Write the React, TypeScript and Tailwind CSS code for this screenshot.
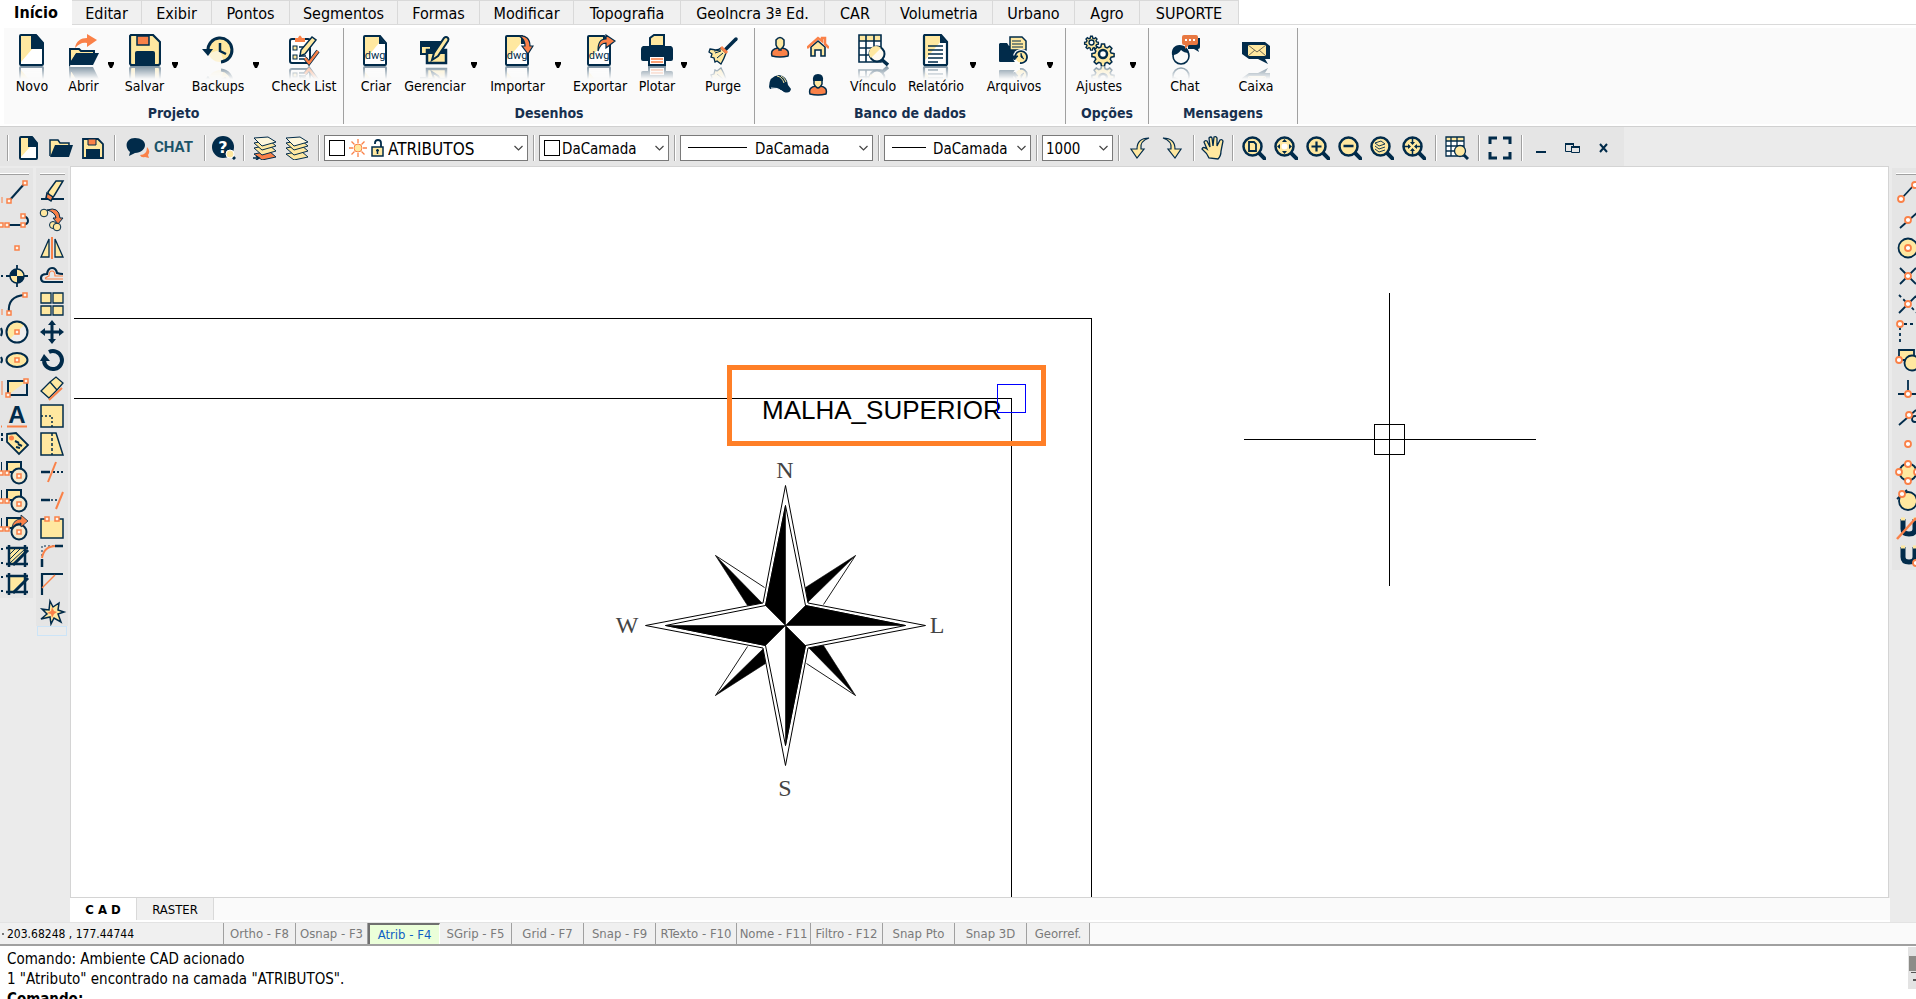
import type { ReactNode } from "react"
import { clsx } from "clsx"

const N = "#012b4a"
const Y = "#ffe8a0"
const O = "#fa8148"

/* ---------- small drawing helpers ---------- */

function Node({ x, y }: { x: number; y: number }) {
  return <rect x={x - 2} y={y - 2} width="4" height="4" fill="#fff3e6" stroke={O} strokeWidth="1.5" />
}

function Dot({ x, y }: { x: number; y: number }) {
  return <circle cx={x} cy={y} r="3" fill="#fff" stroke={O} strokeWidth="1.8" />
}

function Lens({ children }: { children?: ReactNode }) {
  return (
    <>
      <path d="M17 17l5.500 5.500" stroke={N} strokeWidth="4" strokeLinecap="square" />
      <circle cx="10.500" cy="10.500" r="9" fill={Y} stroke={N} strokeWidth="2.500" />
      {children}
    </>
  )
}

/* ---------- ribbon icons, 32 x 32 ---------- */

const dwgPage = (
  <>
    <path d="M5 2h17l5 6v22q0 1-1 1H5q-1 0-1-1V3q0-1 1-1z" fill="#fff" />
    <path d="M5 2h14v7L5 26z" fill={Y} />
    <path d="M5 2h15l6 7v21q0 1-1 1H5q-1 0-1-1V3q0-1 1-1z" fill="none" stroke={N} strokeWidth="2" />
    <path d="M19 2l7 8h-7z" fill={N} />
    <text x="15" y="25" textAnchor="middle" fontSize="11" fontFamily="Roboto, sans-serif" fill={N}>
      dwg
    </text>
  </>
)

const gearPath =
  "M-1.500-10h3l.6 3 2 .9 2.600-1.700 2.200 2.200-1.700 2.600.9 2 3 .6v3l-3 .6-.9 2 1.700 2.600-2.200 2.200-2.600-1.700-2 .9-.6 3h-3l-.6-3-2-.9-2.600 1.700-2.200-2.200 1.700-2.600-.9-2-3-.6v-3l3-.6.9-2-1.700-2.600 2.200-2.200 2.600 1.700 2-.9z"

const big = {
  novo: (
    <>
      <path d="M5 1h14l8 9v20q0 1-1 1H5z" fill="#fff" />
      <path d="M5 1h12v13L5 28z" fill={Y} />
      <path d="M5 1h15l7 8v21q0 1-1 1H5q-1 0-1-1V2q0-1 1-1z" fill="none" stroke={N} strokeWidth="2" />
      <path d="M15 1h6l6 8v6H15z" fill={N} />
    </>
  ),
  abrir: (
    <>
      <path d="M7 14C8 7 13 4 19 4V0l10 6-10 7v-4c-5-1-8 1-12 5z" fill={O} />
      <path d="M2 30V15h9l2 2h13v4H8z" fill={Y} stroke={N} strokeWidth="2" />
      <path d="M8 19h23l-6 12H2z" fill={N} />
    </>
  ),
  salvar: (
    <>
      <path d="M2 1h22l7 7v21q0 2-2 2H2q-1-1-1-2V2z" fill={Y} stroke={N} strokeWidth="2.200" />
      <path d="M8 2h12v9H8z" fill={O} stroke={N} strokeWidth="1.500" />
      <path d="M6 31V19q0-2 2-2h16q2 0 2 2v12z" fill={N} />
    </>
  ),
  backups: (
    <>
      <circle cx="18" cy="16" r="12" fill={Y} />
      <path d="M18 16l4 12H8l-4-8z" fill="#fafafa" opacity=".6" />
      <path d="M6 17A12 12 0 1 1 19 28" fill="none" stroke={N} strokeWidth="3" />
      <path d="M0 15h11l-5 7z" fill={N} />
      <path d="M18 9v8l6 3" fill="none" stroke={N} strokeWidth="2.500" />
    </>
  ),
  check: (
    <>
      <rect x="2" y="5" width="20" height="24" rx="2" fill="#fff" stroke={N} strokeWidth="2" />
      <path d="M7 8V4h3q2-5 4 0h3v4z" fill={O} />
      <rect x="5" y="12" width="4" height="4" fill={Y} stroke={N} />
      <rect x="5" y="21" width="4" height="4" fill={Y} stroke={N} />
      <path d="M11 13h5M11 22h7M11 25h7" stroke={N} strokeWidth="1.500" />
      <path d="M12 22l1-6L24 3l4 3-11 14z" fill={Y} stroke={N} strokeWidth="1.500" />
      <path d="M17 24l4 5 9-12" fill="none" stroke={N} strokeWidth="4" />
      <path d="M17 24l4 5 9-12" fill="none" stroke={O} strokeWidth="2.500" />
    </>
  ),
  criar: dwgPage,
  gerenciar: (
    <>
      <path d="M1 7h23v12H1z" fill={N} />
      <path d="M2 12h10v8H2z" fill={Y} stroke={N} strokeWidth="2" />
      <path d="M8 16h19v13H8z" fill={Y} stroke={N} strokeWidth="2.500" />
      <path d="M8 16h19v4H8z" fill={N} />
      <path d="M13 26l2-7L25 4q2-2 4 0 1 1 0 3L19 22z" fill={Y} stroke={N} strokeWidth="2" />
    </>
  ),
  importar: (
    <>
      {dwgPage}
      <path d="M17 2c7-1 11 3 11 10h3l-5 8-6-8h3c0-5-2-8-6-10z" fill={O} stroke={N} strokeWidth="1.200" />
    </>
  ),
  exportar: (
    <>
      {dwgPage}
      <path d="M14 17c0-8 2-12 8-12V1l9 6-9 7v-5c-4 0-6 2-8 8z" fill={O} stroke={N} strokeWidth="1.200" />
    </>
  ),
  plotar: (
    <>
      <path d="M9 12V4l4-3h10v11z" fill={Y} stroke={N} strokeWidth="2" />
      <path d="M2 12h28q2 1 2 3v10q0 2-2 2h-5v-4H7v4H2q-2 0-2-2V15q0-2 2-3z" fill={N} />
      <path d="M8 22h16v9H8z" fill="#fff" stroke={N} strokeWidth="2" />
      <path d="M10 25h12M10 28h12" stroke={O} strokeWidth="1.500" />
    </>
  ),
  purge: (
    <>
      <path d="M29 5L18 16" stroke={N} strokeWidth="3.500" strokeLinecap="round" />
      <path d="M3 15q8 2 11-1l5 5q-2 6-5 11l-4-3-2 1-1-4-3-1 1-3-3-2z" fill={Y} stroke={N} strokeWidth="1.300" />
      <path d="M8 19l6-2M10 24l6-5M7 17l7-1" stroke={N} strokeWidth="1" />
      <path d="M14 13l6 6" stroke={O} strokeWidth="3" />
    </>
  ),
  vinculo: (
    <>
      <path d="M2 1h22v27H2z" fill="#fff" />
      <path d="M2 1h22v6H2z" fill={Y} />
      <path d="M2 1h22v27H2zM2 7h22M2 14h22M2 21h22M9 1v27M17 1v27" fill="none" stroke={N} strokeWidth="1.600" />
      <path d="M24 25l7 6" stroke={N} strokeWidth="3.500" />
      <circle cx="20" cy="20" r="7.500" fill="#fffaf0" stroke={N} strokeWidth="2" />
      <path d="M14 24a7 7 0 0 1 10-10z" fill={Y} />
    </>
  ),
  relatorio: (
    <>
      <path d="M5 1h17l6 7v22q0 1-1 1H5z" fill="#fff" />
      <path d="M5 1h16v6L5 26z" fill={Y} />
      <path d="M5 1h16l6 7v22q0 1-1 1H5q-1 0-1-1V2q0-1 1-1z" fill="none" stroke={N} strokeWidth="2.200" />
      <path d="M20 1v8h7" fill={N} />
      <path d="M8 12h15M8 16h15M8 20h15M8 24h15M8 28h10" stroke={N} strokeWidth="1.500" />
    </>
  ),
  arquivos: (
    <>
      <path d="M2 9h7l2 3h12v16H2q-1 0-1-1V10z" fill={N} />
      <path d="M12 3h12l4 4v9H12z" fill={Y} stroke={N} strokeWidth="1.500" />
      <path d="M14 7h9M14 10h11M14 13h11" stroke={N} strokeWidth="1.200" />
      <circle cx="23" cy="23" r="8" fill="#fff" />
      <circle cx="23" cy="23" r="5.500" fill={Y} />
      <path d="M17 23a6 6 0 1 1 5 6" fill="none" stroke={N} strokeWidth="1.800" />
      <path d="M13 22h7l-3.500 4zM23 19v4l3 2" fill={N} stroke={N} />
    </>
  ),
  ajustes: (
    <>
      <g transform="translate(20 20)">
        <path d={gearPath} fill={Y} stroke={N} strokeWidth="1.500" />
        <circle r="4" fill="#fff" stroke={N} strokeWidth="2.500" />
      </g>
      <g transform="translate(8.500 8.500) scale(.62)">
        <path d={gearPath} fill={Y} stroke={N} strokeWidth="2.200" />
        <circle r="4" fill="#fff" stroke={N} strokeWidth="2.200" />
      </g>
    </>
  ),
  chat: (
    <>
      <path d="M19 4h12v9q0 2-2 2l1 3-5-3h-6z" fill={N} />
      <circle cx="12" cy="22" r="8" fill="#fafafa" stroke={N} strokeWidth="1.600" />
      <path d="M3 21C2 14 7 9 15 12q5 3 5 7-5 0-8-3-3 5-9 5z" fill={N} />
      <path d="M15 1h12q2 0 2 2v6q0 2-2 2h-7l-4 4v-4h-1q-2 0-2-2V3q0-2 2-2z" fill="#e87842" />
      <path d="M16 6h2M20 6h2M24 6h2" stroke="#fff" strokeWidth="2" />
    </>
  ),
  caixa: (
    <>
      <path d="M2 8h23l5 4v13h-5l3 5-10-5H9l-7-5z" fill={N} />
      <path d="M8 11h18v11H8z" fill={Y} />
      <path d="M8 11l9 7 9-7M8 22l7-6M26 22l-7-6" fill="none" stroke="#6d6a55" />
    </>
  ),
}

type BigIcon = keyof typeof big

interface Item {
  icon: BigIcon
  label: string
  box: string
  menu?: boolean
}

const smallTools = [
  {
    name: "Pessoa",
    art: (
      <>
        <path d="M3 20q-2-7 6-8h4q8 1 6 8-8 2-16 0z" fill={O} stroke={N} strokeWidth="1.500" />
        <path d="M7 4q4-5 8 0v5q-1 3-3 4v1h-2v-1q-2-1-3-4z" fill={Y} stroke={N} strokeWidth="1.500" />
      </>
    ),
  },
  {
    name: "Imóvel",
    art: (
      <>
        <path d="M4 11v9h4v-6h6v6h4v-9l-7-6z" fill={Y} stroke={N} strokeWidth="1.600" />
        <path d="M0 12L11 2l4 3V2h3v6l4 4" fill="none" stroke={O} strokeWidth="2.500" />
      </>
    ),
  },
  {
    name: "Técnico",
    art: (
      <>
        <path d="M0 13Q0 2 10 1q8 1 9 10l3 4q-1 5-7 3-6-5-14-3z" fill={N} />
        <path d="M8 2q5 1 7 7M12 2q4 2 5 6" fill="none" stroke={Y} />
        <path d="M2 14q7-1 12 4" fill="none" stroke="#fff" />
      </>
    ),
  },
  {
    name: "Engenheiro",
    art: (
      <>
        <path d="M3 20q-2-7 6-8h4q8 1 6 8-8 2-16 0z" fill={O} stroke={N} strokeWidth="1.500" />
        <path d="M7 5h8v5q-2 4-4 4t-4-4z" fill={Y} stroke={N} strokeWidth="1.500" />
        <path d="M6 7q-1-7 5-7t5 7z" fill={N} />
      </>
    ),
  },
]

const groups: { title: string; box: string; small?: boolean; items: Item[] }[] = [
  {
    title: "Projeto",
    box: "w-[340px]",
    items: [
      { icon: "novo", label: "Novo", box: "w-[56px]" },
      { icon: "abrir", label: "Abrir", box: "w-[47px]", menu: true },
      { icon: "salvar", label: "Salvar", box: "ml-[3px] w-[53px]", menu: true },
      { icon: "backups", label: "Backups", box: "ml-[5px] w-[68px]", menu: true },
      { icon: "check", label: "Check List", box: "ml-[8px] w-[72px]" },
    ],
  },
  {
    title: "Desenhos",
    box: "w-[411px]",
    items: [
      { icon: "criar", label: "Criar", box: "ml-[8px] w-[48px]" },
      { icon: "gerenciar", label: "Gerenciar", box: "w-[70px]", menu: true },
      { icon: "importar", label: "Importar", box: "ml-[3px] w-[73px]", menu: true },
      { icon: "exportar", label: "Exportar", box: "ml-[4px] w-[68px]" },
      { icon: "plotar", label: "Plotar", box: "w-[46px]", menu: true },
      { icon: "purge", label: "Purge", box: "ml-[10px] w-[50px]" },
    ],
  },
  {
    title: "Banco de dados",
    box: "w-[311px]",
    small: true,
    items: [
      { icon: "vinculo", label: "Vínculo", box: "ml-[8px] w-[56px]" },
      { icon: "relatorio", label: "Relatório", box: "ml-[2px] w-[66px]", menu: true },
      { icon: "arquivos", label: "Arquivos", box: "ml-[5px] w-[64px]", menu: true },
    ],
  },
  {
    title: "Opções",
    box: "w-[83px]",
    items: [{ icon: "ajustes", label: "Ajustes", box: "ml-[3px] w-[60px]", menu: true }],
  },
  {
    title: "Mensagens",
    box: "w-[149px]",
    items: [
      { icon: "chat", label: "Chat", box: "ml-[10px] w-[52px]" },
      { icon: "caixa", label: "Caixa", box: "ml-[19px] w-[52px]" },
    ],
  },
]

const tabs = [
  { label: "Editar", box: "w-[70px]" },
  { label: "Exibir", box: "w-[70px]" },
  { label: "Pontos", box: "w-[78px]" },
  { label: "Segmentos", box: "w-[108px]" },
  { label: "Formas", box: "w-[82px]" },
  { label: "Modificar", box: "w-[94px]" },
  { label: "Topografia", box: "w-[107px]" },
  { label: "GeoIncra 3ª Ed.", box: "w-[144px]" },
  { label: "CAR", box: "w-[61px]" },
  { label: "Volumetria", box: "w-[107px]" },
  { label: "Urbano", box: "w-[82px]" },
  { label: "Agro", box: "w-[65px]" },
  { label: "SUPORTE", box: "w-[99px]" },
]

function Tabs() {
  return (
    <nav className="flex h-[25px] shrink-0 border-b border-[#dadada] bg-white text-[16px] leading-[22px]">
      <button className="-mb-px w-[72px] bg-white text-center font-bold">Início</button>
      {tabs.map((tab) => (
        <button
          key={tab.label}
          className={clsx("border-t border-r border-[#d9d9d9] bg-[#f0f0f0] pt-[2px] text-center whitespace-nowrap first-of-type:border-l", tab.box)}
        >
          {tab.label}
        </button>
      ))}
    </nav>
  )
}

function RibbonButton({ item }: { item: Item }) {
  return (
    <>
      <button className={clsx("flex flex-col items-center pt-[6px] whitespace-nowrap", item.box)}>
        <svg className="size-[32px] shrink-0" viewBox="0 0 32 32" fill="none" aria-hidden="true">
          {big[item.icon]}
        </svg>
        <span className="h-[13px] overflow-hidden opacity-50 [mask-image:linear-gradient(#000,transparent)] [&_text]:hidden" aria-hidden="true">
          <svg className="size-[32px] -scale-y-100" viewBox="0 0 32 32" fill="none">
            {big[item.icon]}
          </svg>
        </span>
        <span className="leading-[14px]">{item.label}</span>
      </button>
      {item.menu && (
        <button className="flex w-[8px] justify-center pt-[34px]" aria-label={`Mais opções de ${item.label}`}>
          <svg className="h-[7px] w-[6px]" viewBox="0 0 6 7" aria-hidden="true">
            <path d="M0 0h6v2L4 6H2L0 2z" fill="#000" />
          </svg>
        </button>
      )}
    </>
  )
}

function Ribbon() {
  return (
    <div className="shrink-0 border-b border-[#d0d0d0] bg-white pt-[3px] pb-[2px] pl-[4px]">
      <div className="flex h-[96px] bg-[#fafafa]">
        {groups.map((group) => (
          <section key={group.title} className={clsx("flex shrink-0 flex-col border-r border-[#a0a0a0]", group.box)}>
            <div className="flex h-[76px] items-start text-[14px]">
              {group.small && (
                <div className="ml-[6px] grid grid-cols-2">
                  {smallTools.map((tool) => (
                    <button key={tool.name} aria-label={tool.name} className="flex size-[38px] items-center justify-center">
                      <svg className="size-[22px]" viewBox="0 0 22 22" fill="none" aria-hidden="true">
                        {tool.art}
                      </svg>
                    </button>
                  ))}
                </div>
              )}
              {group.items.map((item) => (
                <RibbonButton key={item.label} item={item} />
              ))}
            </div>
            <h2 className="text-center text-[14px] leading-[18px] font-bold text-[#17304f]">{group.title}</h2>
          </section>
        ))}
      </div>
    </div>
  )
}

/* ---------- quick toolbar, 24 x 24 icons ---------- */

function Tool({ name, narrow, children }: { name: string; narrow?: boolean; children: ReactNode }) {
  return (
    <button
      aria-label={name}
      title={name}
      className={clsx("flex h-[26px] shrink-0 items-center justify-center", narrow ? "w-[28px]" : "w-[32px]")}
    >
      <svg className="size-[24px]" viewBox="0 0 24 24" fill="none" aria-hidden="true">
        {children}
      </svg>
    </button>
  )
}

function Sep() {
  return <span className="mr-[4px] ml-[5px] h-[26px] w-[2px] shrink-0 border-r border-l border-r-white border-l-[#a0a0a0]" />
}

function Combo({ name, value, className, children }: { name: string; value: string; className: string; children?: ReactNode }) {
  return (
    <label className={clsx("relative flex h-[26px] shrink-0 items-center border border-[#7a7a7a] bg-white", className)}>
      {children}
      <select aria-label={name} className="h-full min-w-0 flex-1 appearance-none bg-transparent pt-px leading-[24px] outline-none">
        <option>{value}</option>
      </select>
      <svg className="pointer-events-none absolute top-[9px] right-[4px] h-[7px] w-[9px]" viewBox="0 0 9 7" fill="none" aria-hidden="true">
        <path d="M.5 1l4 4 4-4" stroke="#444" strokeWidth="1.200" />
      </svg>
    </label>
  )
}

function Layers({ hot }: { hot?: boolean }) {
  return (
    <>
      <path d="M1 18l15-3 7 6-14 3z" fill={hot ? O : Y} stroke={N} />
      <path d="M1 12l15-3 7 6-14 4z" fill={Y} stroke={N} />
      <path d="M1 7l15-3 7 6-14 4z" fill={Y} stroke={N} />
      <path d="M1 2l14-1 8 5-14 4z" fill="#fdf6dc" stroke={N} />
      {hot && <path d="M0 22h5M3 20l3 2-3 2" stroke={N} strokeWidth="1.500" />}
    </>
  )
}

function Toolbar() {
  return (
    <div className="flex h-[39px] shrink-0 bg-[#ebebeb]">
      <div className="flex items-center bg-[#e5e5e5] pt-[2px] pr-px pl-[2px] text-[15px]">
        <Sep />
        <Tool name="Novo">
          <path d="M4 1h11l6 7v15H4z" fill="#fff" />
          <path d="M4 1h9v10L4 21z" fill={Y} />
          <path d="M4 1h11l5 6v15q0 1-1 1H4q-1 0-1-1V2q0-1 1-1z" stroke={N} strokeWidth="2" />
          <path d="M11 1h5l4 6v4h-9z" fill={N} />
        </Tool>
        <Tool name="Abrir">
          <path d="M1 20V4h8l2 3h9v4" fill={Y} stroke={N} strokeWidth="1.500" />
          <path d="M6 9h18l-4 12H1z" fill={N} />
        </Tool>
        <Tool name="Salvar">
          <path d="M2 3h15l5 5v14H2z" fill={Y} stroke={N} strokeWidth="1.800" />
          <path d="M7 3h8v6H7z" fill={O} stroke={N} />
          <path d="M5 22v-9h14v9z" fill={N} />
        </Tool>
        <Sep />
        <button className="flex h-[26px] w-[79px] shrink-0 items-center gap-[4px] pl-[6px]">
          <svg className="h-[22px] w-[24px] shrink-0" viewBox="0 0 24 22" fill="none" aria-hidden="true">
            <path d="M14 18q7 0 7-8 4 4 1 8l1 3-4-1q-4 1-5-2z" fill={O} />
            <path d="M9 1c6 0 10 3 10 7s-4 8-10 8l-6 3 1-4C-2 10 0 1 9 1z" fill={N} />
          </svg>
          <span className="font-['Roboto',sans-serif] text-[15px] font-bold text-[#1b5368]">CHAT</span>
        </button>
        <Sep />
        <Tool name="Ajuda" narrow>
          <circle cx="11" cy="11" r="11" fill={N} />
          <text x="11" y="17" textAnchor="middle" fontSize="16" fontWeight="700" fontFamily="DejaVu Sans, sans-serif" fill="#fff">
            ?
          </text>
          <path d="M20 20l3 3" stroke={N} strokeWidth="3" />
          <circle cx="18" cy="18" r="4" fill={Y} stroke="#fff" />
        </Tool>
        <Sep />
        <Tool name="Camada atual">
          <Layers hot />
        </Tool>
        <Tool name="Camadas">
          <Layers />
        </Tool>
        <Sep />
        <Combo name="Camada" value="ATRIBUTOS" className="w-[204px] gap-[4px] pl-[4px] text-[17px]">
          <span className="size-[16px] shrink-0 border border-black" />
          <svg className="size-[18px] shrink-0" viewBox="0 0 18 18" aria-hidden="true">
            <path
              d="M9 0v4M9 14v4M0 9h4M14 9h4M2.500 2.500l3 3M12.500 12.500l3 3M2.500 15.500l3-3M12.500 5.500l3-3"
              stroke={O}
              strokeWidth="1.300"
            />
            <circle cx="9" cy="9" r="4" fill={Y} stroke={O} />
          </svg>
          <svg className="h-[18px] w-[13px] shrink-0" viewBox="0 0 13 18" fill="none" aria-hidden="true">
            <path d="M4 5V4q0-3 3-3t3 3v4" stroke={N} strokeWidth="1.800" />
            <rect x="1" y="8" width="11" height="9" fill={Y} stroke={N} strokeWidth="1.500" />
            <path d="M6.500 10v5M5 11.500h3" stroke={N} strokeWidth="1.500" />
          </svg>
        </Combo>
        <Sep />
        <Combo name="Cor" value="DaCamada" className="w-[130px] gap-[2px] pl-[4px]">
          <span className="size-[16px] shrink-0 border border-black" />
        </Combo>
        <Sep />
        <Combo name="Tipo de linha" value="DaCamada" className="w-[193px] gap-[8px] pl-[7px]">
          <span className="h-px w-[59px] shrink-0 bg-black" />
        </Combo>
        <Sep />
        <Combo name="Espessura" value="DaCamada" className="w-[147px] gap-[7px] pl-[7px]">
          <span className="h-px w-[34px] shrink-0 bg-black" />
        </Combo>
        <Sep />
        <Combo name="Escala" value="1000" className="w-[71px] pl-[3px]" />
        <Sep />
        <Tool name="Desfazer">
          <path d="M21 2C13 2 9 6 9 13H3l6 9 7-9h-3c-1-5 2-9 8-11z" fill={Y} stroke={N} strokeWidth="1.200" />
        </Tool>
        <Tool name="Refazer">
          <path d="M3 2c8 0 12 4 12 11h6l-6 9-7-9h3C12 8 9 4 3 2z" fill={Y} stroke={N} strokeWidth="1.200" />
        </Tool>
        <Sep />
        <Tool name="Mover tela" narrow>
          <path
            d="M8 22q-2-5-7-9 1-3 5 0L3 6q1-2 3-1l3 6-1-9q2-2 3 0l1 8 1-9q2-1 3 1v8l3-6q2-1 3 1l-2 10q0 5-3 8z"
            fill={Y}
            stroke={N}
            strokeWidth="1.300"
          />
        </Tool>
        <Sep />
        <Tool name="Zoom página">
          <Lens>
            <path d="M7 6h5l2 2v7H7z" fill={Y} stroke={N} strokeWidth="1.800" />
          </Lens>
        </Tool>
        <Tool name="Zoom extensão">
          <Lens>
            <circle cx="10.500" cy="10.500" r="3" fill="#fff" />
            <path d="M10.500 3l2.500 3H8zM10.500 18L8 15h5zM3 10.500L6 8v5zM18 10.500L15 8v5z" fill={N} />
          </Lens>
        </Tool>
        <Tool name="Aproximar">
          <Lens>
            <path d="M5.500 10.500h10M10.500 5.500v10" stroke={N} strokeWidth="2.200" />
          </Lens>
        </Tool>
        <Tool name="Afastar">
          <Lens>
            <path d="M5.500 10h10" stroke={N} strokeWidth="2.500" />
          </Lens>
        </Tool>
        <Tool name="Zoom camada">
          <Lens>
            <path d="M5 7l6-2 4 3-6 2zM5 10l4 3 6-2M5 13l4 3 6-2" stroke={N} strokeWidth=".9" />
          </Lens>
        </Tool>
        <Tool name="Zoom centro">
          <Lens>
            <path d="M10.500 2v6M10.500 13v6M2 10.500h6M13 10.500h6" stroke={N} strokeWidth="1.500" />
            <path d="M8 6h5l-2.500 3zM8 15h5l-2.500-3zM6 8v5l3-2.500zM15 8v5l-3-2.500z" fill={N} />
          </Lens>
        </Tool>
        <Sep />
        <Tool name="Tabela">
          <path d="M1 1h18v19H1z" fill="#fff" />
          <path d="M1 1h18v4H1z" fill={Y} />
          <path d="M1 1h18v19H1zM1 5h18M1 10h18M1 15h18M6 1v19M12 1v19" stroke={N} strokeWidth="1.300" />
          <path d="M18 18l5 5" stroke={N} strokeWidth="3" />
          <circle cx="15" cy="15" r="5.500" fill={Y} stroke={N} strokeWidth="1.300" />
        </Tool>
        <Sep />
        <Tool name="Tela cheia">
          <path d="M2 8V2h7M15 2h7v6M22 16v6h-7M9 22H2v-6" stroke={N} strokeWidth="3" />
        </Tool>
        <Sep />
        <Tool name="Minimizar">
          <path d="M5 16h10" stroke={N} strokeWidth="2" />
        </Tool>
        <Tool name="Restaurar">
          <path d="M2.500 7.500h8v8h-8z" stroke={N} />
          <path d="M2 8h9" stroke={N} strokeWidth="2" />
          <path d="M8.500 10.500h8v6h-8z" fill="#e5e5e5" stroke={N} />
          <path d="M8 11h9" stroke={N} strokeWidth="2" />
        </Tool>
        <Tool name="Fechar">
          <path d="M5 8l7 8M12 8l-7 8" stroke={N} strokeWidth="2" />
        </Tool>
      </div>
    </div>
  )
}

/* ---------- side palettes, 32 x 28 icons ---------- */

const squareCircle = (
  <>
    <path d="M1.500 4v12" stroke={N} />
    <path d="M7 4h14v10H7z" fill={Y} stroke={N} strokeWidth="2" />
    <circle cx="19" cy="18" r="7.500" fill="#f4ead0" stroke={N} strokeWidth="2" />
    <Node x={19} y={18} />
    <Node x={7} y={15} />
    <Node x={1} y={15} />
  </>
)

const frame = (
  <>
    <path d="M1 7h2M1 21h2" stroke={N} strokeWidth="2" />
    <path d="M9 6h16v3L12 22H9z" fill={Y} />
    <path d="M9 3v22M25 3v22M6 6h22M6 22h22" stroke={N} strokeWidth="2.500" />
    <path d="M13 23L28 8" stroke={N} strokeWidth="3" />
  </>
)

const drawTools: [string, ReactNode][] = [
  ["Linha", <><path d="M2 19v6" stroke={O} /><path d="M9 23L25 5" stroke={N} strokeWidth="2" /><Node x={9} y={23} /><Node x={25} y={5} /></>],
  ["Polilinha", <><path d="M7 19h16q5-1 5-4 0-4-5-5" stroke={N} strokeWidth="2" /><Node x={1} y={19} /><Node x={7} y={19} /><Node x={23} y={19} /><Node x={23} y={10} /></>],
  ["Ponto", <Node x={17} y={14} />],
  ["Ponto topográfico", <><path d="M6 14h22M17 3v22M1 14h2" stroke={N} strokeWidth="1.800" /><circle cx="17" cy="14" r="7" fill={Y} stroke={N} strokeWidth="1.500" /><path d="M17 14V7a7 7 0 0 0-7 7zM17 14v7a7 7 0 0 0 7-7z" fill={N} /></>],
  ["Arco", <><path d="M2 19v6" stroke={O} /><path d="M9 23Q7 6 25 5" stroke={N} strokeWidth="2" /><Node x={9} y={23} /><Node x={25} y={5} /></>],
  ["Círculo", <><path d="M1 10q2 4 0 8" stroke={N} strokeWidth="2" /><circle cx="17" cy="14" r="10.500" fill="#eee" /><path d="M9.600 21.400A10.500 10.500 0 0 1 24.400 6.600z" fill={Y} /><circle cx="17" cy="14" r="10.500" stroke={N} strokeWidth="2" /><Node x={17} y={14} /></>],
  ["Elipse", <><path d="M1 11q2 3 0 6" stroke={N} strokeWidth="2" /><ellipse cx="17" cy="14" rx="10.500" ry="7" fill={Y} stroke={N} strokeWidth="2" /><Node x={17} y={14} /></>],
  ["Retângulo", <><path d="M2 7v14" stroke={O} /><path d="M8 7h19L8 21z" fill={Y} /><path d="M8 7h19v14H8z" stroke={N} strokeWidth="2" /><Node x={8} y={21} /><Node x={26} y={7} /></>],
  ["Texto", <><path d="M1 24.500h1M7 24.500h20" stroke={O} strokeWidth="2" /><text x="17" y="21" textAnchor="middle" fontSize="24" fontWeight="700" fontFamily="Liberation Sans, sans-serif" fill={N}>A</text></>],
  ["Etiqueta", <><path d="M2 3v10" stroke={N} strokeWidth="2" strokeDasharray="3 2" /><path d="M7 4l9-1 12 12-9 9L7 12z" fill={Y} stroke={N} strokeWidth="1.800" /><circle cx="11.500" cy="8" r="2.500" fill={O} /><path d="M15 11l4 2M18 14l4 2M16 17l4 1" stroke={N} strokeWidth="2" /></>],
  ["Recortar forma", squareCircle],
  ["Unir forma", squareCircle],
  ["Mover forma", <>{squareCircle}<path d="M12 13q2-8 9-8V1l7 6-7 6V9q-5 0-9 4z" fill={O} stroke={N} strokeWidth=".8" /></>],
  ["Hachura", <>{frame}<path d="M10 12l6-6M10 17L21 6M10 21L25 7" stroke={N} /></>],
  ["Contorno", frame],
]

const editTools: [string, ReactNode][] = [
  ["Apagar", <><path d="M5 21h23" stroke={N} strokeWidth="2" /><path d="M12 14L20 3h7l-9 15-4 3z" fill={Y} stroke={N} strokeWidth="1.500" /><path d="M11 15l6 4-2 4-5-3z" fill={O} stroke={N} strokeWidth="1.500" /></>],
  ["Copiar", <><circle cx="8" cy="7" r="3.800" fill={Y} stroke={N} /><path d="M11 4q12-4 13 8h3l-5 6-5-6h3q-1-6-9-8z" fill={O} stroke={N} /><circle cx="17" cy="19" r="3.500" fill={Y} stroke={N} /><circle cx="21" cy="21" r="3.800" fill={Y} stroke={N} /></>],
  ["Espelhar", <><path d="M13 5v18H5zM19 5v18h8z" fill={Y} stroke={N} strokeWidth="1.300" /><path d="M16 3v22" stroke={O} strokeWidth="2" /></>],
  ["Paralela", <><path d="M27 20H9q-4 0-4-4t6-4q1-6 5-6t5 5q3 1 6 1" fill="#e8e8e8" stroke={N} strokeWidth="2.200" /><path d="M27 17H10q-2-1 3-3 0-5 3-5t3 5h8" stroke={O} strokeWidth="1.200" /></>],
  ["Matriz", <path d="M5 3h10v10H5zM17 3h10v10H17zM5 16h10v9H5zM17 16h10v9H17z" fill={Y} stroke={N} strokeWidth="1.300" />],
  ["Mover", <><path d="M16 5v18M7 14h18" stroke={N} strokeWidth="3" /><path d="M16 2l4 5h-8zM16 26l4-5h-8zM4 14l5-4v8zM28 14l-5-4v8z" fill={N} /></>],
  ["Rotacionar", <><path d="M13 6a9 9 0 1 1-5 9" stroke={N} strokeWidth="4" /><path d="M4 15h10L8 8z" fill={N} /></>],
  ["Alinhar", <><path d="M14 8l6-5 7 6-6 7zM5 17l9-9 7 8-8 8z" fill={Y} stroke={N} strokeWidth="1.300" /><path d="M13 26l13-12" stroke={O} strokeWidth="2" /></>],
  ["Escala", <><path d="M5 3h22v22H5z" fill={Y} stroke={N} strokeWidth="1.500" /><path d="M5 14h11v11" stroke={N} strokeWidth="1.500" strokeDasharray="2 2" /></>],
  ["Esticar", <><path d="M5 3h15l7 22H5z" fill={Y} stroke={N} strokeWidth="1.500" /><path d="M16 3v22" stroke={N} strokeWidth="1.500" strokeDasharray="3 2" /></>],
  ["Aparar", <><path d="M5 14h9" stroke={N} strokeWidth="2.500" /><path d="M17 14h11" stroke={N} strokeWidth="2" strokeDasharray="2 2" /><path d="M12 24l8-20" stroke={O} strokeWidth="2" /></>],
  ["Estender", <><path d="M5 14h9" stroke={N} strokeWidth="2.500" /><path d="M15 14h8" stroke={N} strokeWidth="1.500" strokeDasharray="2 2" /><path d="M20 23l7-17" stroke={O} strokeWidth="2" /></>],
  ["Quebrar", <><path d="M5 5h22v19H5z" fill={Y} stroke={N} strokeWidth="1.500" /><path d="M12 5h8" stroke="#e5e5e5" strokeWidth="3" /><Node x={11} y={5} /><Node x={21} y={5} /></>],
  ["Concordar", <><path d="M6 14V4h14" stroke={N} strokeDasharray="2 2" /><path d="M6 16Q8 4 20 4" stroke={O} strokeWidth="2" /><path d="M6 17v8M19 4h8" stroke={N} strokeWidth="2.500" /></>],
  ["Chanfro", <><path d="M6 25V4h21" stroke={N} strokeWidth="2.200" /><path d="M6 18L19 5" stroke={O} strokeWidth="1.500" /></>],
  ["Explodir", <><path d="M14 3l3 6 6-4-1 7 6 2-6 2 3 8-7-4-3 6-1-7-9 2 6-5-5-5 7 1z" fill={Y} stroke={N} strokeWidth="1.500" /><path d="M16 9l2 4 3 1-3 2-2 4-1-4-4-1 4-2z" fill={O} /></>],
]

const magnet = <path d="M11 5v10q0 5 6 5t6-5V5" stroke={N} strokeWidth="5" />

const snapTools: [string, ReactNode][] = [
  ["Extremidade", <><path d="M9 21L23 6" stroke={N} strokeWidth="1.800" /><Dot x={9} y={21} /><Dot x={23} y={7} /></>],
  ["Ponto médio", <><path d="M8 22L26 6" stroke={N} strokeWidth="1.800" /><Dot x={16} y={14} /></>],
  ["Centro", <><circle cx="16" cy="14" r="9.500" fill={Y} stroke={N} strokeWidth="1.800" /><Dot x={16} y={14} /></>],
  ["Interseção", <><path d="M8 22L24 6M8 6l16 16" stroke={N} strokeWidth="1.800" /><Dot x={16} y={14} /></>],
  ["Interseção aparente", <><path d="M7 23L24 6" stroke={N} strokeWidth="1.800" /><path d="M7 5l18 18" stroke={N} strokeWidth="1.800" strokeDasharray="3 3" /><Dot x={16} y={14} /></>],
  ["Extensão", <><path d="M8 9v17M12 6h14" stroke={N} strokeWidth="1.800" strokeDasharray="3 3" /><Dot x={8} y={6} /></>],
  ["Inserção", <><path d="M7 4h15v10H7z" fill={Y} stroke={N} strokeWidth="1.800" /><circle cx="20" cy="17" r="7.500" fill={Y} stroke={N} strokeWidth="1.800" /><Dot x={7} y={14} /></>],
  ["Perpendicular", <><path d="M6 20h20M16 6v12" stroke={N} strokeWidth="1.800" /><Dot x={16} y={20} /></>],
  ["Próximo", <><path d="M7 23L24 8" stroke={N} strokeWidth="1.800" /><circle cx="23" cy="17" r="3" stroke={N} strokeWidth="1.800" /><Dot x={17} y={13} /></>],
  ["Nó", <Dot x={16} y={14} />],
  ["Quadrante", <><circle cx="16" cy="14" r="8.500" fill={Y} stroke={N} strokeWidth="1.800" /><Dot x={16} y={6} /><Dot x={7} y={14} /><Dot x={16} y={23} /><Dot x={25} y={14} /></>],
  ["Tangente", <><path d="M5 13L15 4" stroke={N} strokeWidth="1.800" /><circle cx="16" cy="15" r="9" fill={Y} stroke={N} strokeWidth="1.800" /><Dot x={10} y={8} /></>],
  ["Desligar snap", <>{magnet}<path d="M9 5h4M21 5h4" stroke={Y} strokeWidth="3" /><path d="M5 25L24 4" stroke={O} strokeWidth="2.500" /></>],
  ["Ligar snap", <>{magnet}<path d="M9 5h4M21 5h4" stroke={Y} strokeWidth="3" /><Dot x={24} y={21} /></>],
]

function Palette({ name, tools, className, grip }: { name: string; tools: [string, ReactNode][]; className: string; grip: string }) {
  return (
    <div role="toolbar" aria-label={name} className={clsx("flex shrink-0 flex-col overflow-hidden bg-[#e5e5e5]", className)}>
      <span className="h-[10px] shrink-0 pt-[5px]">
        <span className={clsx("block h-[2px] border-t border-b border-t-white border-b-[#a0a0a0]", grip)} />
      </span>
      {tools.map(([label, art]) => (
        <button key={label} aria-label={label} title={label} className="h-[28px] w-[32px] shrink-0">
          <svg className="h-[28px] w-[32px]" viewBox="0 0 32 28" fill="none" aria-hidden="true">
            {art}
          </svg>
        </button>
      ))}
    </div>
  )
}

/* ---------- drawing area ---------- */

function CompassPoint({ angle }: { angle: number }) {
  return (
    <g transform={`rotate(${angle})`}>
      <path d="M70-70L20-38l2 15z" fill="#000" stroke="#000" strokeWidth=".6" />
      <path d="M70-70L38-21" stroke="#000" strokeWidth=".9" />
    </g>
  )
}

function Drawing() {
  return (
    <svg className="absolute inset-0 size-full" fill="none" role="img" aria-label="Desenho">
      <g stroke="#000" shapeRendering="crispEdges">
        <path d="M3 151.500h1017.500V2000" />
        <path d="M3 231.500h937.500V2000" />
      </g>
      <rect x="658.500" y="200.500" width="314" height="76" stroke="#ff7f27" strokeWidth="5" />
      <text x="691" y="252" fontSize="26" fontFamily="Liberation Sans, Arial, sans-serif" fill="#000">
        MALHA_SUPERIOR
      </text>
      <rect x="926.500" y="217.500" width="28" height="28" stroke="#00f" shapeRendering="crispEdges" />

      <g transform="translate(714.500 458.500)">
        {[0, 90, 180, 270].map((angle) => (
          <CompassPoint key={angle} angle={angle} />
        ))}
        <path
          d="M0-140L22.500-22.500 140 0 22.500 22.500 0 140-22.500 22.500-140 0-22.500-22.500z"
          fill="#fff"
          stroke="#000"
        />
        <path d="M0-120L20-20 120 0 20 20 0 120-20 20-120 0-20-20z" fill="#fff" stroke="#000" />
        <path d="M0 0L-20-20 0-120zM0 0L20-20 120 0zM0 0L20 20 0 120zM0 0L-20 20-120 0z" fill="#000" stroke="#000" strokeWidth=".6" />
      </g>
      <g fontSize="24" fontFamily="Liberation Serif, Times New Roman, serif" fill="#444" textAnchor="middle">
        <text x="714" y="311">N</text>
        <text x="714" y="629">S</text>
        <text x="556" y="466">W</text>
        <text x="866" y="466">L</text>
      </g>

      <g stroke="#000" shapeRendering="crispEdges">
        <path d="M1173 272.500h292M1318.500 126v293" />
        <rect x="1303.500" y="257.500" width="30" height="30" />
      </g>
    </svg>
  )
}

const modes = [
  { label: "Ortho - F8", box: "w-[72px]" },
  { label: "Osnap - F3", box: "w-[72px]" },
  { label: "Atrib - F4", box: "w-[72px]", on: true },
  { label: "SGrip - F5", box: "w-[72px]" },
  { label: "Grid - F7", box: "w-[72px]" },
  { label: "Snap - F9", box: "w-[72px]" },
  { label: "RTexto - F10", box: "w-[81px]" },
  { label: "Nome - F11", box: "w-[74px]" },
  { label: "Filtro - F12", box: "w-[72px]" },
  { label: "Snap Pto", box: "w-[72px]" },
  { label: "Snap 3D", box: "w-[72px]" },
  { label: "Georref.", box: "w-[63px]" },
]

function StatusBar() {
  return (
    <footer className="flex h-[24px] shrink-0 border-t border-b-2 border-t-[#e3e3e3] border-b-[#a0a0a0] bg-[#fafafa] text-[12px]">
      <div className="flex w-[224px] items-center border-r border-[#a0a0a0] bg-[#f0f0f0] pl-[2px]">
        <span className="mr-[3px] size-[2px] bg-[#777]" />
        203.68248 , 177.44744
      </div>
      {modes.map((mode) => (
        <button
          key={mode.label}
          aria-pressed={!!mode.on}
          className={clsx(
            "border-r text-center text-[13px] whitespace-nowrap",
            mode.box,
            mode.on
              ? "border-t-2 border-l-2 border-t-[#707070] border-r-white border-l-[#707070] bg-[#ebffd9] text-[#0f5fc4]"
              : "border-[#a0a0a0] bg-[#f0f0f0] text-[#7a7a7a]",
          )}
        >
          {mode.label}
        </button>
      ))}
    </footer>
  )
}

export default function App() {
  return (
    <div className="flex h-screen flex-col overflow-hidden bg-[#ebebeb] font-['DejaVu_Sans_Condensed','Noto_Sans',sans-serif] text-black">
      <Tabs />
      <Ribbon />
      <Toolbar />

      <div className="flex min-h-0 flex-1">
        <aside className="flex w-[70px] shrink-0 items-start gap-[3px] pt-[2px]">
          <Palette name="Desenho" tools={drawTools} className="w-[33px]" grip="w-[29px]" />
          <div className="w-[32px]">
            <Palette name="Edição" tools={editTools} className="w-[32px]" grip="ml-[4px] w-[25px]" />
            <div className="mx-px h-[10px] border border-[#cce4f7]" />
          </div>
        </aside>

        <main className="flex min-w-0 flex-1 flex-col">
          <div className="relative mr-px min-h-0 flex-1 overflow-hidden border border-[#d4d4d4] bg-white">
            <Drawing />
          </div>
          <div className="flex h-[24px] shrink-0 border-b-2 border-white bg-[#fafafa] text-[13px] leading-[20px]">
            <button className="-mt-px w-[67px] border-r border-[#d9d9d9] bg-white pt-[3px] text-center font-bold">C A D</button>
            <button className="w-[77px] border-r border-[#d9d9d9] bg-[#f0f0f0] pt-[2px] text-center">RASTER</button>
          </div>
        </main>

        <aside className="flex w-[26px] shrink-0 items-start overflow-hidden pt-[2px] pl-[2px]">
          <Palette name="Osnap" tools={snapTools} className="w-[24px]" grip="ml-[4px]" />
        </aside>
      </div>

      <StatusBar />

      <section aria-label="Comandos" className="flex h-[53px] shrink-0 overflow-hidden bg-white pl-[7px] text-[15px] leading-[20px]">
        <div className="min-w-0 flex-1 pt-[3px]">
          <p>Comando: Ambiente CAD acionado</p>
          <p>1 "Atributo" encontrado na camada "ATRIBUTOS".</p>
          <p className="font-bold">Comando:</p>
        </div>
        <div className="mt-[1px] h-[42px] w-[8px] bg-[#e3e3e3] pt-[9px] pl-px">
          <div className="h-[15px] bg-[#8c8c88]" />
          <div className="mt-[1px] ml-[2px] h-px bg-[#555]" />
          <div className="mt-[6px] ml-[4px] h-[2px] bg-[#555]" />
        </div>
      </section>
    </div>
  )
}
